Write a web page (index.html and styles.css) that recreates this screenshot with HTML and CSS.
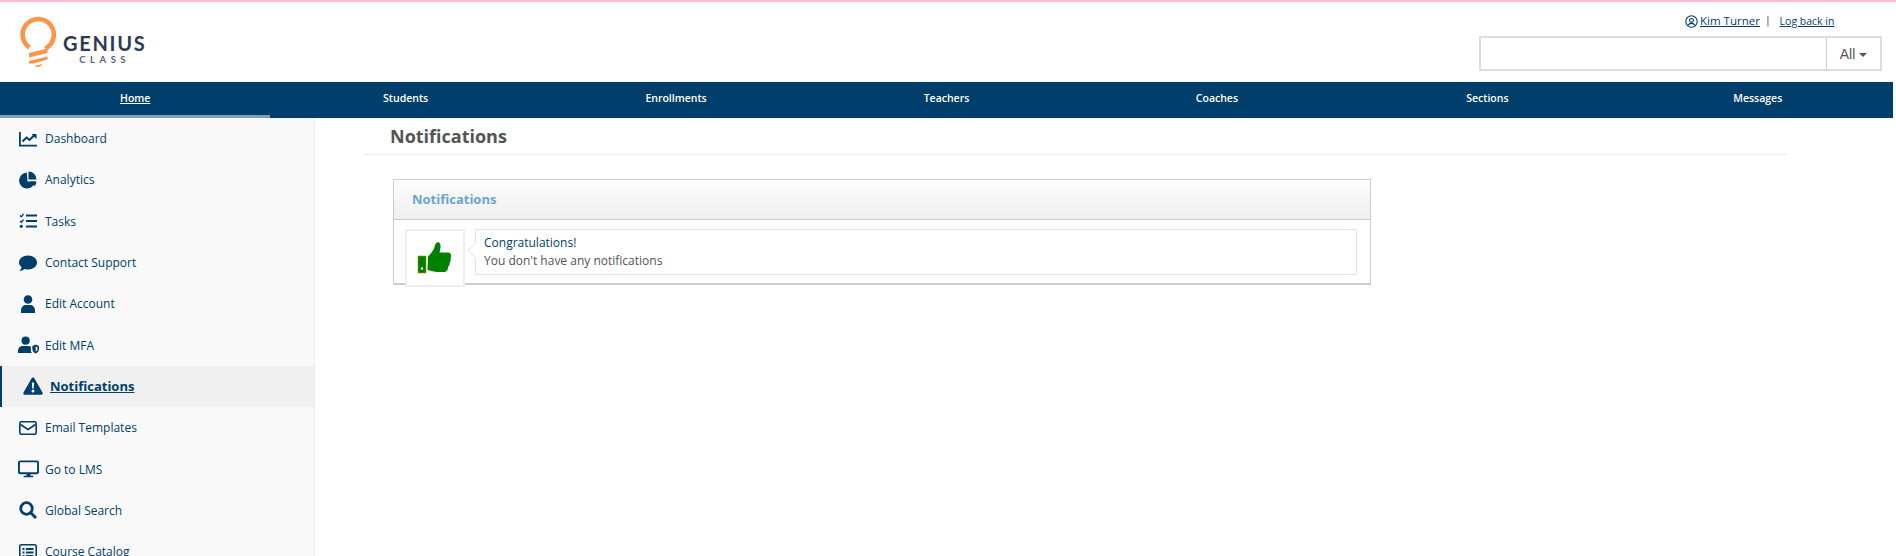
FILE: index.html
```html
<!DOCTYPE html>
<html lang="en">
<head>
<meta charset="utf-8">
<title>Notifications</title>
<link rel="stylesheet" href="styles.css">
</head>
<body>
<div class="page">
  <header class="top">
    <a class="logo" href="#">
      <svg class="bulb" viewBox="0 0 36 52" width="36" height="52">
        <path d="M9.5 31.5 A15.6 15.6 0 1 1 27 31.5 L26 33" fill="none" stroke="#ff9347" stroke-width="4.6"/>
        <path d="M10.5 37 L29 32.5 V37 L10.5 41.5 Z M10.5 45 L29 40.5 V43.5 L15 47.5 L10.5 47.5 Z M16 50 L24 48 C23 51 18 52 16 50 Z" fill="#ff9347" transform="translate(-1.5 0)"/>
      </svg>
      <span class="logo-text"><span class="logo-main">GENIUS</span><span class="logo-sub">CLASS</span></span>
    </a>
    <div class="top-right">
      <div class="user-line">
        <a class="user" href="#">
          <svg viewBox="0 0 24 24" width="13" height="13" fill="none" stroke="#003f6b" stroke-width="2"><circle cx="12" cy="12" r="10.5"/><circle cx="12" cy="10" r="3.6"/><path d="M5.5 19.5c1.5-3 4-4 6.500-4s5 1 6.500 4"/></svg>
          <span> Kim Turner</span></a>
        <span class="sep">|</span>
        <a class="logback" href="#">Log back in</a>
      </div>
      <div class="search">
        <input class="search-input" type="text" aria-label="Search">
        <button class="search-btn" type="button">All<span class="caret"></span></button>
      </div>
    </div>
  </header>
  <nav class="nav">
    <a class="nav-item active" href="#">Home</a>
    <a class="nav-item" href="#">Students</a>
    <a class="nav-item" href="#">Enrollments</a>
    <a class="nav-item" href="#">Teachers</a>
    <a class="nav-item" href="#">Coaches</a>
    <a class="nav-item" href="#">Sections</a>
    <a class="nav-item" href="#">Messages</a>
  </nav>
  <div class="layout">
    <aside class="side">
      <a class="side-item" href="#"><svg class="ico" viewBox="0 0 18 16"><path d="M0 1h1.800v12.800H18V15.500H0z"/><path d="M3.500 10.500 L7.500 6.500 L10.500 9 L15 4.500" fill="none" stroke="#003f6b" stroke-width="2"/><path d="M12.500 3h5v5z"/></svg><span>Dashboard</span></a>
      <a class="side-item" href="#"><svg class="ico" viewBox="0 0 18 18"><path d="M7.800 1.500 A8 8 0 1 0 16 10.500 L8.500 10.500 Z" transform="translate(0 0)"/><path d="M9.500 0.500 A8 8 0 0 1 17.500 8.500 L9.500 8.500 Z"/><path d="M10.800 10.500H17.500A8 8 0 0 1 15.500 15.300Z"/></svg><span>Analytics</span></a>
      <a class="side-item" href="#"><svg class="ico" viewBox="0 0 18 16"><path d="M1 2.500l1.300 1.300L4.500 1M1 8l1.300 1.300L4.500 6.500" fill="none" stroke="#003f6b" stroke-width="1.300"/><circle cx="2.300" cy="13.300" r="1.600"/><path d="M7 1.500h11v2H7zM7 7h11v2H7zM7 12.500h11v2H7z"/></svg><span>Tasks</span></a>
      <a class="side-item" href="#"><svg class="ico" viewBox="0 0 18 16"><path d="M9 0.500c5 0 9 3 9 7s-4 7-9 7c-1.300 0-2.500-.2-3.600-.6C4.200 14.800 2.500 15.700.5 15.700c1-1 1.900-2.300 2-3.700C.9 10.700 0 9.200 0 7.500c0-4 4-7 9-7z"/></svg><span>Contact Support</span></a>
      <a class="side-item" href="#"><svg class="ico" viewBox="0 0 18 18"><circle cx="9" cy="4.500" r="4.300"/><path d="M2 18v-2.500C2 12 4.500 10 7 10h4c2.500 0 5 2 5 5.500V18z"/></svg><span>Edit Account</span></a>
      <a class="side-item mfa" href="#"><svg class="ico wide" viewBox="0 0 22 18"><circle cx="8" cy="4.500" r="4.300"/><path d="M0 17.500v-2C0 12 2.500 10 5 10h6c1 0 1.800.2 2.500.7v4.300c0 1 .4 1.800 1 2.500z"/><path d="M18.500 8.500l3.500 1.500v3c0 2.500-1.500 4-3.500 5-2-1-3.500-2.500-3.500-5v-3z"/><path d="M18.500 10.500v5.500c1-.6 1.900-1.600 1.900-3v-1.700z" fill="#f9f9f9"/></svg><span>Edit MFA</span></a>
      <a class="side-item current" href="#"><svg class="ico warn" viewBox="0 0 20 18"><path d="M10 .5c.7 0 1.200.4 1.500.9l8 14c.6 1-.1 2.300-1.300 2.300H1.800c-1.200 0-1.900-1.300-1.300-2.300l8-14C8.800.9 9.300.5 10 .5z"/><path d="M8.900 5.500h2.200l-.3 6h-1.600zM10 12.500a1.500 1.500 0 1 1 0 3 1.500 1.500 0 0 1 0-3z" fill="#f5f5f5"/></svg><span>Notifications</span></a>
      <a class="side-item" href="#"><svg class="ico" viewBox="0 0 18 14"><rect x=".8" y=".8" width="16.400" height="12.400" rx="1.500" fill="none" stroke="#003f6b" stroke-width="1.600"/><path d="M1.500 3.500 L9 8.500 L16.500 3.500" fill="none" stroke="#003f6b" stroke-width="1.600"/></svg><span>Email Templates</span></a>
      <a class="side-item mfa" href="#"><svg class="ico wide" viewBox="0 0 22 18"><rect x="1" y="1" width="20" height="12.500" rx="1.200" fill="none" stroke="#003f6b" stroke-width="2"/><path d="M9 14h4v2h3v1.700H6V16h3z"/></svg><span>Go to LMS</span></a>
      <a class="side-item" href="#"><svg class="ico" viewBox="0 0 18 18"><circle cx="7.500" cy="7.500" r="5.800" fill="none" stroke="#003f6b" stroke-width="2.800"/><path d="M11.500 11.500 L17 17" fill="none" stroke="#003f6b" stroke-width="3"/></svg><span>Global Search</span></a>
      <a class="side-item" href="#"><svg class="ico" viewBox="0 0 18 16"><rect x=".8" y=".8" width="16.400" height="14.400" rx="1.500" fill="none" stroke="#003f6b" stroke-width="1.600"/><path d="M3.500 4h2v2h-2zM7 4h7.500v2H7zM3.500 7.500h2v2h-2zM7 7.500h7.500v2H7zM3.500 11h2v2h-2zM7 11h7.500v2H7z"/></svg><span>Course Catalog</span></a>
    </aside>
    <main class="main">
      <h1 class="title">Notifications</h1>
      <section class="panel">
        <h2 class="panel-head">Notifications</h2>
        <div class="panel-body">
          <div class="avatar">
            <svg viewBox="0 0 36 36" width="36" height="36"><path d="M1 16h8v17H1z" fill="#008000"/><path d="M1 16h8v17H1z" fill="none" stroke="#b8860b" stroke-width=".6"/><circle cx="5" cy="28.500" r="1.200" fill="#fff"/><path d="M11 16.500c3-3 6-6.500 7-11 .3-2 2-4 4-3 2.500 1.500 1.500 6.500.5 10h8.500c2 0 3.300 1.500 3 3.500-.2 1 0 2-.5 3 .5 1.500 0 3-1 4 .2 1.500-.2 3-1.500 4 .2 2.500-1.500 5-4.500 5h-6c-3 0-7-1.500-10-2z" fill="#008000"/></svg>
          </div>
          <div class="bubble">
            <div class="bubble-title">Congratulations!</div>
            <div class="bubble-text">You don't have any notifications</div>
          </div>
        </div>
      </section>
    </main>
  </div>
</div>
</body>
</html>
```
FILE: styles.css
```css
* { box-sizing: border-box; }
html, body { margin: 0; padding: 0; height: 100%; overflow: hidden; background: #fff; }
body { font-family: "Open Sans", "DejaVu Sans", sans-serif; color: #003f6b; }
a { color: inherit; text-decoration: none; }

.page { height: 556px; border-top: 2px solid #ffb9d3; overflow: hidden; }

.top { height: 80px; display: flex; justify-content: space-between; }
.logo { display: flex; align-items: flex-start; padding: 14px 0 0 20px; }
.logo .bulb { display: block; }
.logo-text { display: flex; flex-direction: column; align-items: center; margin: 17px 0 0 7px; font-family: "Lato", sans-serif; color: #2e3a55; }
.logo-main { font-size: 20px; font-weight: 700; letter-spacing: 1.700px; line-height: 20px; }
.logo-sub { font-size: 9.500px; font-weight: 700; letter-spacing: 4.500px; line-height: 12px; margin-top: 1px; color: #555f75; }

.top-right { width: 403px; margin-right: 14px; display: flex; flex-direction: column; }
.user-line { height: 34px; padding: 11px 0 0 0; display: flex; align-items: flex-start; font-size: 12px; line-height: 16px; font-family: "DejaVu Sans", sans-serif; margin-left: 206px; white-space: nowrap; }
.user { display: flex; align-items: center; text-decoration: underline; font-size: 11.500px; font-family: "Open Sans", sans-serif; }
.user svg { margin-right: 2px; }
.sep { margin: 0 10px 0 6px; color: #666; font-size: 11px; }
.logback { text-decoration: underline; font-size: 10.500px; font-family: "Open Sans", sans-serif; }
.search { height: 35px; display: flex; border: 2px solid #ddd; }
.search-input { flex: 1; min-width: 0; border: 0; border-right: 1px solid #ccc; padding: 0; background: #fff; }
.search-btn { width: 53px; border: 0; background: #fff; color: #555; font: 14px "Liberation Sans", sans-serif; padding: 0; }
.caret { display: inline-block; margin-left: 4px; vertical-align: 2px; border-top: 4px solid #555; border-left: 4px solid transparent; border-right: 4px solid transparent; }

.nav { width: 1893px; height: 36px; background: #003f6b; display: grid; grid-template-columns: repeat(7, 1fr); }
.nav-item { color: #fff; text-align: center; font-size: 10.500px; font-weight: 600; line-height: 33px; }
.nav-item.active { border-bottom: 3px solid #7d9fb8; text-decoration: underline; }

.layout { display: flex; height: 438px; }
.side { width: 315px; flex: none; background: #f9f9f9; border-right: 1px solid #eee; padding-top: 0; overflow: hidden; }
.side-item { height: 41.300px; display: flex; align-items: center; padding-left: 19px; font-size: 12px; }
.side-item span { margin-left: 8px; }
.ico { width: 18px; height: 18px; fill: #003f6b; flex: none; }
.mfa { padding-left: 18px; }
.mfa .ico.wide { width: 21px; }
.mfa span { margin-left: 6px; }
.side-item.current { background: #f0f0f0; border-left: 2px solid #003f6b; padding-left: 21px; font-weight: 700; font-size: 13px; text-decoration: underline; }
.ico.warn { width: 20px; }
.current span { margin-left: 7px; }

.main { flex: 1; min-width: 0; padding: 0 109px 0 48px; }
.title { margin: 0 0 24px; height: 37px; padding: 3px 0 0 27px; font: 700 18px/30px "Open Sans", sans-serif; color: #555; border-bottom: 1px solid #eee; }
.panel { margin-left: 30px; width: 978px; height: 106px; border: 1px solid #ccc; border-bottom-width: 2px; }
.panel-head { margin: 0; height: 40px; padding-left: 18px; font: 700 13px/38px "Open Sans", sans-serif; color: #6aa5d2; background: linear-gradient(#fdfdfd, #efefef); border-bottom: 1px solid #ccc; }
.panel-body { display: flex; padding: 9px 13px 0 11px; align-items: flex-start; }
.avatar { width: 60px; height: 58px; flex: none; border: 2px solid #eee; background: #fff; display: flex; align-items: center; justify-content: center; position: relative; z-index: 1; }
.bubble { flex: 1; height: 46px; margin-left: 10px; border: 1px solid #dfe3ee; padding: 4px 8px; font-size: 12px; line-height: 18px; position: relative; }
.bubble::before { content: ""; position: absolute; left: -8px; top: 13px; width: 14px; height: 14px; background: #fff; border-left: 1px solid #dfe3ee; border-bottom: 1px solid #dfe3ee; transform: rotate(45deg) scale(.75); }
.bubble-title { color: #003f6b; }
.bubble-text { color: #555; }
```
